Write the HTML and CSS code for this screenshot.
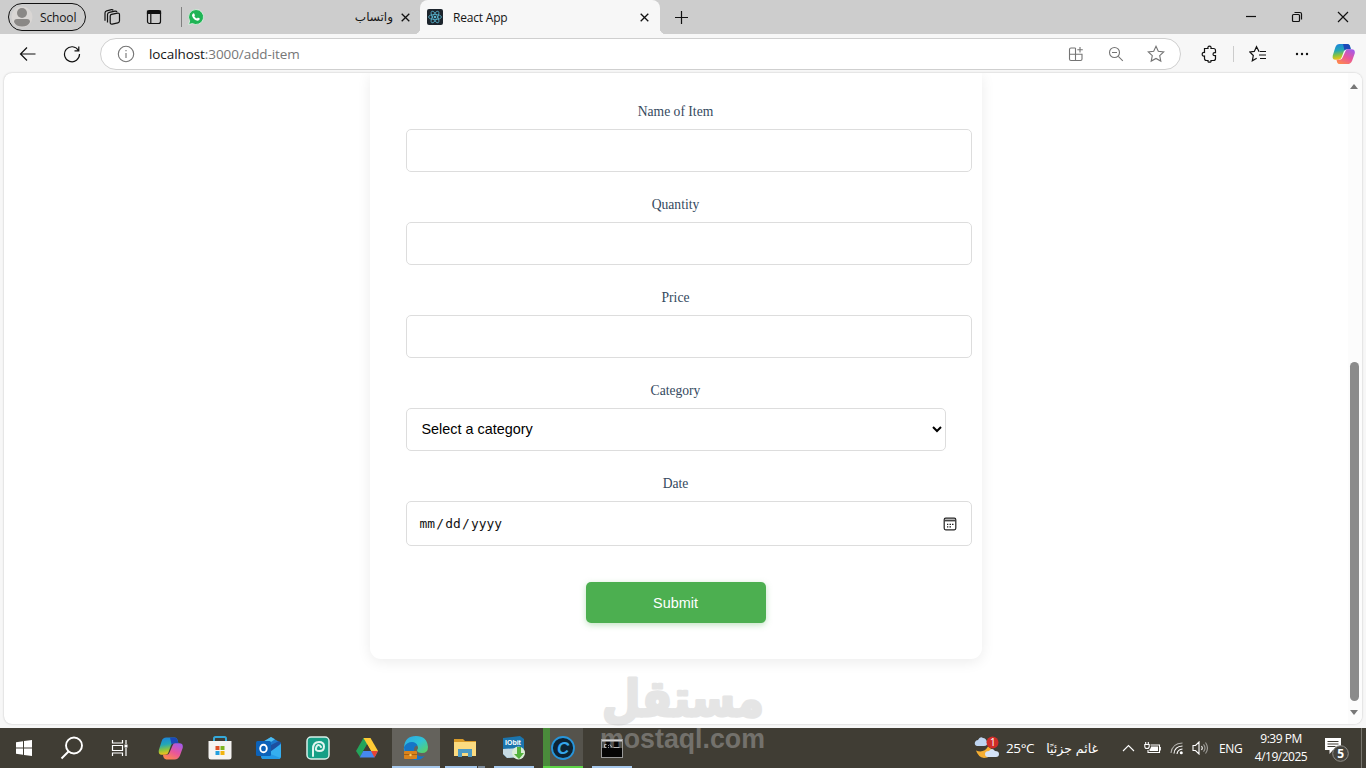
FILE: index.html
```html
<!DOCTYPE html>
<html lang="en">
<head>
<meta charset="utf-8">
<title>React App</title>
<link rel="stylesheet" href="styles.css">
</head>
<body>
<svg width="0" height="0" class="defs">
  <defs>
    <linearGradient id="cpA" x1="0" y1="0" x2="0.2" y2="1"><stop offset="0" stop-color="#1b7fe0"/><stop offset=".45" stop-color="#24a7b5"/><stop offset=".75" stop-color="#8fc43c"/><stop offset="1" stop-color="#f5c21b"/></linearGradient>
    <linearGradient id="cpB" x1=".8" y1="0" x2=".2" y2="1"><stop offset="0" stop-color="#a35bea"/><stop offset=".5" stop-color="#e8559b"/><stop offset="1" stop-color="#ff8a4a"/></linearGradient>
    <linearGradient id="edA" x1="0" y1="0" x2="1" y2="1"><stop offset="0" stop-color="#2aa6e8"/><stop offset=".5" stop-color="#30c3d5"/><stop offset="1" stop-color="#5fd454"/></linearGradient>
    <symbol id="copilot" viewBox="0 0 24 24">
      <path d="M8 1.500h8q2 0 2.700 2l.9 3.500h-4.500q-2 0-2.700 2.200l-2.300 6.300q-.8 2.500-3.200 2.500H3.500Q0 18 .8 13.500L3.500 5Q4.500 1.500 8 1.500Z" fill="url(#cpA)"/>
      <path d="M11.500 1.500H16q2 0 2.700 2l.9 3.500h-4q-1.700 0-2.500 1.500Z" fill="#1c48b8"/>
      <path d="M16 22.500H8q-2 0-2.700-2L4.700 18h3.500q2.200 0 3-2.500l2.800-6.300Q14.700 7 16.500 7h4q4 0 3.200 4.500l-2.700 7.500Q19.500 22.500 16 22.500Z" fill="url(#cpB)"/>
    </symbol>
    <symbol id="star" viewBox="0 0 18 18"><path d="M9 1.300l2.300 5 5.400.6-4 3.700 1.100 5.500L9 13.400l-4.800 2.700 1.100-5.500-4-3.700 5.400-.6Z"/></symbol>
  </defs>
</svg>
<div class="screen">
  <header class="tabstrip">
    <div class="profile">
      <svg width="22" height="22" viewBox="0 0 22 22"><circle cx="11" cy="11" r="10.500" fill="#d9d6d4"/><circle cx="11" cy="7" r="5" fill="#8a8886"/><path d="M3 16q0-3 3-3h10q3 0 3 3-2 4.500-8 4.500T3 16Z" fill="#8a8886"/></svg>
      <span>School</span>
    </div>
    <svg class="workspaces line" width="18" height="18" viewBox="0 0 18 18"><path d="M8.500 6.300l6-1.200q2-.3 2 1.700v6q0 1.600-1.600 2l-5.700 1.300q-2 .4-2-1.600V8q0-1.400 1.300-1.700Z"/><path d="M4.500 14.500V6.500q0-1.800 1.800-2.200L12 3.100q1.500-.2 2 1"/><path d="M2 12.700V5Q2 3.200 3.700 2.800L8.500 1.700q1.200-.2 1.800.6"/></svg>
    <svg class="sidetabs line" width="16" height="16" viewBox="0 0 16 16"><rect x="1.500" y="1.500" width="13" height="13" rx="2"/><path d="M1.500 2h13v2.500h-13Z" fill="#111"/><path d="M4.800 5v9"/></svg>
    <span class="divider"></span>
    <div class="tab idle">
      <svg width="16" height="16" viewBox="0 0 16 16"><path d="M8 .5A7.500 7.500 0 1 1 4.300 14.500L.7 15.500l1-3.600A7.500 7.500 0 0 1 8 .5Z" fill="#1fb455" stroke="#effaf2" stroke-width=".7"/><path d="M5 4.500l1-.3 1 2-.7 1q1 1.700 2.700 2.400l.9-1 1.900.9q0 2-2 2.200-4.300-.7-5.800-5Q4 5.500 5 4.500Z" fill="#fff"/></svg>
      <span class="tabname" dir="rtl" lang="ar">واتساب</span>
      <svg class="x" width="9" height="9" viewBox="0 0 9 9"><path d="M.7.7l7.600 7.600M8.300.7L.7 8.300"/></svg>
    </div>
    <div class="tab active">
      <svg width="16" height="16" viewBox="0 0 16 16"><rect width="16" height="16" rx="2" fill="#1d252d"/><g fill="none" stroke="#58b4ce" stroke-width=".8"><ellipse cx="8" cy="8" rx="6.500" ry="2.500"/><ellipse cx="8" cy="8" rx="6.500" ry="2.500" transform="rotate(60 8 8)"/><ellipse cx="8" cy="8" rx="6.500" ry="2.500" transform="rotate(120 8 8)"/></g><circle cx="8" cy="8" r="1.300" fill="#58b4ce"/></svg>
      <span class="tabname">React App</span>
      <svg class="x" width="9" height="9" viewBox="0 0 9 9"><path d="M.7.7l7.600 7.600M8.300.7L.7 8.300"/></svg>
    </div>
    <svg class="plus line" width="15" height="15" viewBox="0 0 15 15"><path d="M7.500 1v13M1 7.500h13"/></svg>
    <div class="winctl">
      <svg class="line" width="12" height="12" viewBox="0 0 12 12"><path d="M1 5.500h10"/></svg>
      <svg class="line" width="12" height="12" viewBox="0 0 12 12"><rect x="1.500" y="3.500" width="7" height="7" rx="1"/><path d="M3.500 1.500H9q1.500 0 1.500 1.500v5.500"/></svg>
      <svg class="line" width="12" height="12" viewBox="0 0 12 12"><path d="M1 1l10 10M11 1L1 11"/></svg>
    </div>
  </header>

  <nav class="toolbar">
    <svg class="back line" width="18" height="16" viewBox="0 0 18 16"><path d="M8 1.500L1.500 8 8 14.500M1.500 8h15"/></svg>
    <svg class="reload line" width="18" height="18" viewBox="0 0 18 18"><path d="M15.500 5.500A7.500 7.500 0 1 0 16.500 9M15.800 1.500v4.300h-4.300"/></svg>
    <div class="address">
      <svg class="gray" width="18" height="18" viewBox="0 0 18 18"><circle cx="9" cy="9" r="7.700"/><path d="M9 8v5M9 5v1.300"/></svg>
      <span class="url"><b>localhost</b>:3000/add-item</span>
      <svg class="gray apps" width="16" height="16" viewBox="0 0 16 16"><path d="M7.500 2H3Q1.500 2 1.500 3.500v9.500q0 1.500 1.500 1.500h9.500q1.500 0 1.500-1.500V8.300H1.500M7.500 2v12.500M12 1v5.500M9.300 3.700h5.500"/></svg>
      <svg class="gray" width="16" height="16" viewBox="0 0 16 16"><circle cx="6.500" cy="6.500" r="5"/><path d="M4 6.500h5M10.300 10.300l4.500 4.500"/></svg>
      <svg class="gray" width="18" height="18"><use href="#star"/></svg>
    </div>
    <svg class="puzzle line" width="18" height="18" viewBox="0 0 18 18"><path d="M3.500 3.500H7q-.5-2.300 1.500-2.300T10 3.500h2.500q2 0 2 2v2.200h-.8q-1.700 0-1.700 1.500t1.700 1.500h.8v2.800q0 2-2 2H10q.5 1.700-1.500 1.700T7 15.500H5.500q-2 0-2-2V11Q1.200 11.500 1.200 9.300T3.500 7.500Z"/></svg>
    <span class="sep"></span>
    <svg class="favs line" width="18" height="18" viewBox="0 0 18 18"><path d="M10.500 6.500H10L7.500 1.700 5.300 6.400l-4.500.6 3.500 3.500-1 5.300 4.400-2.500M11 6.500h6M10 10h7M11 13.500h6"/></svg>
    <svg class="dots" width="16" height="6" viewBox="0 0 16 6"><circle cx="3" cy="3" r="1.200"/><circle cx="8" cy="3" r="1.200"/><circle cx="13" cy="3" r="1.200"/></svg>
    <svg class="cp" width="23" height="24"><use href="#copilot"/></svg>
  </nav>

  <main class="viewport">
    <div class="page">
      <form class="card">
        <div class="field"><label for="n">Name of Item</label><input id="n" type="text"></div>
        <div class="field"><label for="q">Quantity</label><input id="q" type="text"></div>
        <div class="field"><label for="p">Price</label><input id="p" type="text"></div>
        <div class="field"><label for="c">Category</label><select id="c"><option>Select a category</option></select></div>
        <div class="field"><label>Date</label>
          <div class="date"><span class="mask"><i>mm</i><i>/</i><i>dd</i><i>/</i><i>yyyy</i></span>
            <svg width="14" height="14" viewBox="0 0 14 14"><rect x="1.200" y="1.200" width="11.600" height="11.600" rx="1.500" fill="none" stroke="#222" stroke-width="1.200"/><path d="M1 3.500h12" stroke="#444" stroke-width="1.800"/><path d="M6.500 7.300H8M9 7.300h1.500M4 7.300h1.300M4 9.800h1.300M6.500 9.800H8" stroke="#222" stroke-width="1.300"/></svg>
          </div>
        </div>
        <button type="button">Submit</button>
      </form>
    </div>
    <div class="scroll"><span class="up"></span><span class="thumb"></span><span class="down"></span></div>
  </main>

  <footer class="taskbar">
    <div class="app first"><svg width="16" height="16" viewBox="0 0 16 16" fill="#fff"><path d="M0 2.200l7-1v6.300H0ZM8 1.100L16 0v7.500H8ZM0 8.500h7v6.300l-7-1ZM8 8.500h8V16l-8-1.100Z"/></svg></div>
    <div class="app first"><svg width="24" height="24" viewBox="0 0 24 24" fill="none" stroke="#fff" stroke-width="1.900"><circle cx="14" cy="9.500" r="8"/><path d="M8.500 15.500L1.500 22.500"/></svg></div>
    <div class="app first last"><svg width="18" height="18" viewBox="0 0 18 18" fill="none" stroke="#fff" stroke-width="1.200"><path d="M1.500 1v3h10V1M1.500 17v-3h10v3M1.500 6.500h10v5h-10ZM15 1v4M15 9v8"/><path d="M13.500 5.500h3v3h-3Z" fill="#fff" stroke="none"/></svg></div>
    <div class="app"><svg width="25" height="25"><use href="#copilot"/></svg></div>
    <div class="app"><svg width="24" height="24" viewBox="0 0 24 24"><path d="M6 6V2.500q0-1.500 1.500-1.500h9Q18 1 18 2.500V6" fill="none" stroke="#35a9d9" stroke-width="2"/><path d="M.5 5h23v16q0 2.500-2.500 2.500H3Q.5 23.500.5 21Z" fill="#f5f4f2"/><path d="M7.500 10h4v4h-4Z" fill="#dd5128"/><path d="M12.500 10h4v4h-4Z" fill="#7fb51e"/><path d="M7.500 15h4v4h-4Z" fill="#23a0df"/><path d="M12.500 15h4v4h-4Z" fill="#f2b50f"/></svg></div>
    <div class="app"><svg width="26" height="24" viewBox="0 0 26 24"><path d="M5 7l10-6 10 6v13q0 3-3 3H8q-3 0-3-3Z" fill="#1b77cc"/><path d="M6 6.500L15 1l4 2.300L9 10Z" fill="#4cbcf0"/><path d="M15 9l8-4 2 2-10 10Z" fill="#1d4f9f"/><path d="M25 8v12q0 3-3 3H8q-2 0-2.500-1Z" fill="#35aef0"/><path d="M5 14v6q0 3 3 3h14q1.500 0 2.300-1Z" fill="#2499e6"/><rect x="0" y="5" width="15" height="15" rx="1.500" fill="#0c62b9"/><ellipse cx="7.500" cy="12.500" rx="3.300" ry="3.800" fill="none" stroke="#fff" stroke-width="1.900"/></svg></div>
    <div class="app"><svg width="24" height="24" viewBox="0 0 24 24"><rect x="1" y="1" width="22" height="22" rx="4" fill="#169f86" stroke="#d7efe9" stroke-width="1.500"/><path d="M7 20v-7q0-7 6-7 5 0 5 4.500T13.500 15 10 12t2.500-3 2.500 2" fill="none" stroke="#e1f5ef" stroke-width="2" stroke-linecap="round"/></svg></div>
    <div class="app"><svg width="22" height="20" viewBox="0 0 22 20"><path d="M7.500 0h7L11 6.500 4 19 0 13Z" fill="#23a45b"/><path d="M7.500 0h7L22 13h-7Z" fill="#ffcb35"/><path d="M7.200 13H22l-3.500 6.500H3.700Z" fill="#4688f1"/><path d="M22 13l-3.500 6.500L15 13Z" fill="#e94435"/><path d="M11 6.500L7.200 13H15Z" fill="#403d34"/></svg></div>
    <div class="app on hot"><svg width="26" height="26" viewBox="0 0 26 26"><path d="M1 12Q2 1 13 1t12 11q0 6-6 6-5 0-5-3 2-2 0-5-3-3-7 0-4 3-3 7Q0 17 1 12Z" fill="url(#edA)"/><path d="M1 12Q4 7 9 7q4 0 5.500 3.500Q11 11 11 14.500q0 4.500 5 6.500 4 1 6-.5-4 5-10 4.500Q1 23 1 12Z" fill="#1675c7"/><rect x="1" y="16" width="13" height="8" rx="1" fill="#d9831d"/><path d="M1 19.500h13" stroke="#a8610f" fill="none"/><circle cx="7.500" cy="20" r="1.200" fill="#fbcf65"/></svg></div>
    <div class="app on files"><svg width="22" height="20" viewBox="0 0 22 20"><path d="M0 1h9l2 2h11v4H0Z" fill="#d99b29"/><path d="M0 4h22v14H0Z" fill="#fbdb80"/><path d="M4 19v-8h14v8h-4v-4H8v4Z" fill="#4d9bc4"/></svg></div>
    <div class="app on"><svg width="24" height="26" viewBox="0 0 24 26"><path d="M1 3l17-2 4 3v17l-17 2-4-4Z" fill="#1b75ae"/><path d="M1 14l17-1v9L5 23l-4-4Z" fill="#c7dbe3"/><text x="3" y="10" class="iobit">IObit</text><circle cx="16.500" cy="18" r="6.500" fill="#dceed8"/><path d="M15 12h4v6h3l-5 6-5-5h3Z" fill="#54b23e"/></svg></div>
    <div class="app on green"><svg width="24" height="24" viewBox="0 0 24 24"><circle cx="12" cy="12" r="11" fill="#0d2333" stroke="#2795db" stroke-width="1.800"/><text x="6" y="18" class="cee">C</text></svg></div>
    <div class="app on"><svg width="22" height="19" viewBox="0 0 22 19"><rect x=".5" y=".5" width="21" height="18" fill="#050505" stroke="#999"/><path d="M1 1h20v1.500H1Z" fill="#ddd"/><path d="M5.500 5.500h-2v3h2M7.500 6v.8M7.500 8v.8M9 5.500l2 3M12.500 8.500h6" fill="none" stroke="#ccc" stroke-width=".9"/></svg></div>

    <div class="tray">
      <svg class="weather" width="26" height="24" viewBox="0 0 26 24"><path d="M20 15Q17 22 10 22 4 21 2 14.500q8 3 12-4Z" fill="#f5ae32"/><path d="M3 10q-3-1-2-4 1-2 3-2Q6 0 9 2q3 0 4 4 1 4-3 4Z" fill="#bfd5f1"/><path d="M14 21q-3 0-3-3t4-3q3-4 6 0 4 0 4 3t-3 3Z" fill="#d5e3f8"/><circle cx="18.500" cy="6.500" r="6" fill="#cf2d28"/><text x="16" y="10" class="badge">1</text></svg>
      <span class="temp">25°C</span>
      <span class="cond" dir="rtl" lang="ar">غائم جزئيًا</span>
      <svg class="chev tw" width="13" height="8" viewBox="0 0 13 8"><path d="M1 7l5.500-5.500L12 7"/></svg>
      <svg class="batt tw" width="17" height="13" viewBox="0 0 17 13"><path d="M6.500 3h9v7.500H4V8M1.700 0v2.500M4.300 0v2.500M.8 2.500h4.400v2q0 2-2.200 2t-2.200-2Z"/><path d="M7 4.500h7V9H5.500V7.500Q7 6.500 7 4.500Z" fill="#fff" stroke="none"/><path d="M16.300 5v3.500"/></svg>
      <svg class="wifi tw" width="14" height="14" viewBox="0 0 14 14"><path d="M1 12Q2 2.500 12.500 2" opacity=".6"/><path d="M4 12.500Q4.500 5.500 12.500 5M7 13q.5-4.500 5.500-5"/><circle cx="11.300" cy="11.800" r="1.500" fill="#fff" stroke="none"/></svg>
      <svg class="vol tw" width="17" height="14" viewBox="0 0 17 14"><path d="M1 4.500h2.500L7 1v12L3.500 9.500H1ZM9.500 5q1.500 2 0 4"/><path d="M11.500 3.300q3 3.700 0 7.400M13.500 1.500q4 5.500 0 11" opacity=".5"/></svg>
      <span class="lang">ENG</span>
      <div class="clock"><span>9:39 PM</span><span>4/19/2025</span></div>
      <svg class="note" width="26" height="26" viewBox="0 0 26 26"><path d="M1 1h16v12h-8l-3.500 4v-4H1Z" fill="#fff"/><path d="M3.500 4.500h11M3.500 7h11M3.500 9.500h8" stroke="#403d34"/><circle cx="16.500" cy="16.500" r="7.800" fill="#45443e" stroke="#918f89"/><text x="13.200" y="20.800" class="five">5</text></svg>
      <span class="desk"></span>
    </div>
  </footer>

  <svg class="watermark" width="170" height="84" viewBox="0 0 170 84">
    <text x="3" y="42" class="wm-ar" textLength="162" lengthAdjust="spacingAndGlyphs">مستقل</text>
    <text x="1" y="74" class="wm-en" textLength="165" lengthAdjust="spacingAndGlyphs">mostaql.com</text>
  </svg>
</div>
</body>
</html>
```
FILE: styles.css
```css
* { box-sizing: border-box; }
body { margin: 0; overflow: hidden; }
svg { display: block; flex: none; }
.defs { position: absolute; }
.screen { width: 1366px; height: 768px; position: relative; display: flex; flex-direction: column; background: #f7f7f7; font-family: "Open Sans", "Noto Sans", sans-serif; color: #151515; overflow: hidden; }
.line { fill: none; stroke: #111; stroke-width: 1.2; }
.gray { fill: none; stroke: #747474; stroke-width: 1.1; }

.tabstrip { height: 34px; flex: none; background: #cdcdcd; display: flex; align-items: center; font-size: 12px; }
.profile { margin-left: 8px; width: 78px; height: 28px; border: 1px solid #111; border-radius: 14px; display: flex; align-items: center; padding-left: 2px; gap: 7px; letter-spacing: -.15px; }
.workspaces { margin-left: 17px; }
.sidetabs { margin-left: 25px; }
.divider { width: 1px; height: 20px; background: #808080; margin-left: 19px; }
.tab { display: flex; align-items: center; height: 34px; }
.idle { width: 238px; padding: 0 10px 0 6px; }
.idle .tabname { margin-left: auto; margin-right: 8px; font-family: "DejaVu Sans", sans-serif; font-size: 12px; }
.active { position: relative; width: 240px; height: 34px; background: #f7f7f7; border-radius: 8px 8px 0 0; padding: 0 11px 0 7px; }
.active::before, .active::after { content: ""; position: absolute; bottom: 0; width: 6px; height: 6px; }
.active::before { left: -6px; background: radial-gradient(circle at 0 0, #cdcdcd 6px, #f7f7f7 6.500px); }
.active::after { right: -6px; background: radial-gradient(circle at 100% 0, #cdcdcd 6px, #f7f7f7 6.500px); }
.active .tabname { flex: 1; margin-left: 10px; letter-spacing: -.2px; }
.x { fill: none; stroke: #111; stroke-width: 1.300; }
.plus { margin-left: 14px; }
.winctl { margin-left: auto; margin-right: 17px; display: flex; gap: 34px; }

.toolbar { height: 39px; flex: none; display: flex; align-items: center; }
.back { margin-left: 19px; }
.reload { margin-left: 26px; }
.address { width: 1081px; height: 32px; margin: 1px 0 0 19px; border: 1px solid #cfcfcf; border-radius: 16px; background: #fff; display: flex; align-items: center; gap: 23px; padding: 0 15px 0 16px; }
.url { flex: 1; margin-left: -9px; font-size: 13.500px; letter-spacing: -.08px; color: #777; }
.url b { font-weight: 400; color: #151515; }
.apps { margin-right: 1px; }
.puzzle { margin-left: 20px; }
.sep { width: 1px; height: 16px; background: #ccc; margin-left: 14px; }
.favs { margin-left: 15px; }
.dots { margin-left: 27px; fill: #111; }
.cp { margin-left: 22px; }

.viewport { margin: 0 4px; height: 651px; flex: none; background: #fff; border-radius: 8px; box-shadow: 0 0 2px rgba(0,0,0,.25); display: flex; overflow: hidden; }
.page { flex: 1; overflow: hidden; }
.card { width: 612px; height: 586px; margin-left: 366px; padding: 29px 36px 36px; border-radius: 0 0 11px 11px; box-shadow: 0 3px 14px rgba(0,0,0,.08); display: flex; flex-direction: column; align-items: flex-start; }
.field { width: 540px; margin-bottom: 23px; }
.field label { display: block; height: 20px; line-height: 19px; margin-bottom: 7px; padding-right: 1px; text-align: center; font-family: "Liberation Serif", serif; font-size: 13.600px; color: #34495e; }
.field input, .date { display: block; width: 566px; height: 43px; border: 1px solid #ddd; border-radius: 5px; background: #fff; outline: 0; padding: 0 13px; }
.field select { display: block; width: 540px; height: 43px; border: 1px solid #ddd; border-radius: 5px; background: #fff; color: #000; font: 14.400px "Liberation Sans", sans-serif; padding: 0 0 1px 10.500px; }
.date { height: 45px; display: flex; align-items: center; justify-content: space-between; padding: 0 14px 0 12px; }
.mask { display: flex; font: 12.900px "DejaVu Sans Mono", monospace; color: #111; }
.mask i { font-style: normal; padding: 0 .6px; }
.card button { align-self: center; margin-top: 13px; width: 180px; height: 41px; border: 0; border-radius: 5px; background: #4caf50; color: #fff; font: 14.400px "Liberation Sans", sans-serif; padding: 0 7px 0 6px; box-shadow: 0 2px 6px rgba(76,175,80,.35); }
.scroll { width: 14px; margin-left: auto; background: #fcfcfc; display: flex; flex-direction: column; align-items: center; padding: 11px 2px 9px 0; }
.up, .down { border: 4.500px solid transparent; border-top: 0; border-bottom: 5px solid #777; }
.down { border-bottom: 0; border-top: 5px solid #777; margin-top: auto; }
.thumb { width: 9px; height: 339px; border-radius: 5px; background: #8b8b8b; margin-top: 273px; }

.taskbar { height: 40px; margin-top: 4px; flex: none; background: #403d34; display: flex; color: #fff; }
.app { width: 49px; height: 40px; display: flex; align-items: center; justify-content: center; }
.first { width: 48px; }
.last { margin-right: 2px; }
.on { width: 40px; margin: 0 4.500px; border-bottom: 2px solid #a6c8ec; padding-top: 2px; }
.hot { width: 48px; margin: 0 .5px; background: #64625c; }
.files { border-image: linear-gradient(90deg, #a6c8ec 31px, #403d34 31px, #403d34 32px, #7d8c9c 32px) 2; border-style: solid; border-width: 0 0 2px; }
.green { border-color: #5ed447; background: linear-gradient(90deg, #4a8b3b 7px, #55534c 7px); }
.iobit { font: bold 7px "Liberation Sans", sans-serif; fill: #fff; }
.cee { font: italic bold 17px "Liberation Sans", sans-serif; fill: #35a6eb; }
.badge { font: 10px "Open Sans", sans-serif; fill: #fff; }
.five { font: bold 12px "Open Sans", sans-serif; fill: #fff; }
.tray { margin-left: auto; display: flex; align-items: center; font-size: 12px; width: 392px; flex: none; }
.tw { fill: none; stroke: #fff; stroke-width: 1.100; }
.temp { width: 30px; margin-left: 6px; font-size: 13.500px; letter-spacing: -.4px; }
.cond { width: 56px; margin-left: 6px; font: 12.500px "DejaVu Sans", sans-serif; white-space: nowrap; }
.chev { margin-left: 24px; }
.batt { margin-left: 9px; }
.wifi { margin-left: 9px; }
.vol { margin-left: 8px; }
.lang { width: 24px; margin-left: 10px; letter-spacing: -.3px; }
.clock { width: 60px; margin-left: 8px; display: flex; flex-direction: column; align-items: center; line-height: 18px; font-size: 12px; letter-spacing: -.5px; }
.note { margin-left: 13px; margin-top: 4px; }
.desk { width: 1px; height: 40px; background: #77756e; margin-left: auto; margin-right: 4px; }

.watermark { position: absolute; left: 599px; top: 674px; fill: #c0c0c0; opacity: .4; overflow: visible; }
.wm-ar { font: bold 50px "DejaVu Sans", sans-serif; stroke: #c0c0c0; stroke-width: 3px; stroke-linejoin: round; }
.wm-en { font: bold 27px "Liberation Sans", sans-serif; }
```
